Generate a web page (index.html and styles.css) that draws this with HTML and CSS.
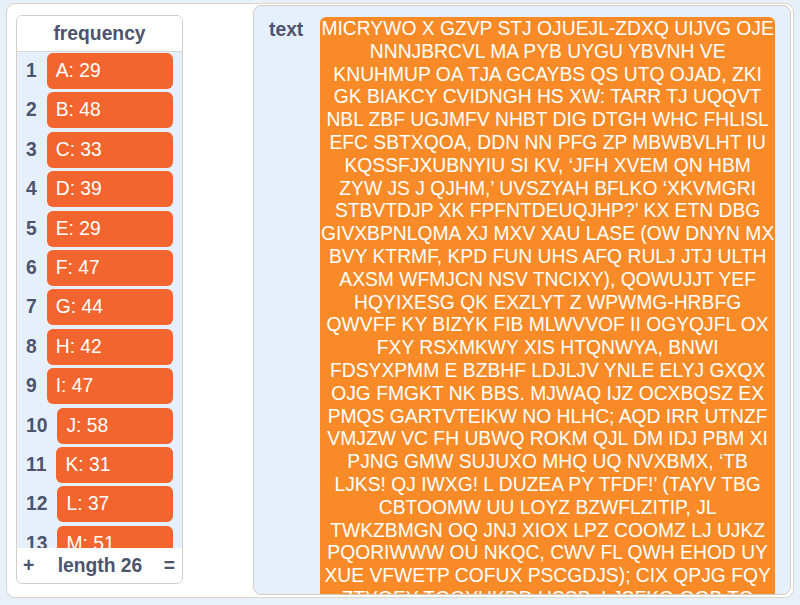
FILE: index.html
```html
<!DOCTYPE html>
<html>
<head>
<meta charset="utf-8">
<link rel="stylesheet" href="styles.css">
</head>
<body>
<div class="stage">
  <div class="list-monitor">
    <div class="list-header">frequency</div>
    <div class="list-body">
      <div class="row"><span class="idx">1</span><span class="item">A: 29</span></div>
      <div class="row"><span class="idx">2</span><span class="item">B: 48</span></div>
      <div class="row"><span class="idx">3</span><span class="item">C: 33</span></div>
      <div class="row"><span class="idx">4</span><span class="item">D: 39</span></div>
      <div class="row"><span class="idx">5</span><span class="item">E: 29</span></div>
      <div class="row"><span class="idx">6</span><span class="item">F: 47</span></div>
      <div class="row"><span class="idx">7</span><span class="item">G: 44</span></div>
      <div class="row"><span class="idx">8</span><span class="item">H: 42</span></div>
      <div class="row"><span class="idx">9</span><span class="item">I: 47</span></div>
      <div class="row"><span class="idx">10</span><span class="item">J: 58</span></div>
      <div class="row"><span class="idx">11</span><span class="item">K: 31</span></div>
      <div class="row"><span class="idx">12</span><span class="item">L: 37</span></div>
      <div class="row"><span class="idx">13</span><span class="item">M: 51</span></div>
    </div>
    <div class="list-footer">
      <span class="foot-btn">+</span>
      <span class="foot-len">length 26</span>
      <span class="foot-btn">=</span>
    </div>
  </div>

  <div class="var-monitor">
    <div class="var-label">text</div>
    <div class="var-value">MICRYWO X GZVP STJ OJUEJL-ZDXQ UIJVG OJE<br>NNNJBRCVL MA PYB UYGU YBVNH VE<br>KNUHMUP OA TJA GCAYBS QS UTQ OJAD, ZKI<br>GK BIAKCY CVIDNGH HS XW: TARR TJ UQQVT<br>NBL ZBF UGJMFV NHBT DIG DTGH WHC FHLISL<br>EFC SBTXQOA, DDN NN PFG ZP MBWBVLHT IU<br>KQSSFJXUBNYIU SI KV, ‘JFH XVEM QN HBM<br>ZYW JS J QJHM,’ UVSZYAH BFLKO ‘XKVMGRI<br>STBVTDJP XK FPFNTDEUQJHP?’ KX ETN DBG<br>GIVXBPNLQMA XJ MXV XAU LASE (OW DNYN MX<br>BVY KTRMF, KPD FUN UHS AFQ RULJ JTJ ULTH<br>AXSM WFMJCN NSV TNCIXY), QOWUJJT YEF<br>HQYIXESG QK EXZLYT Z WPWMG-HRBFG<br>QWVFF KY BIZYK FIB MLWVVOF II OGYQJFL OX<br>FXY RSXMKWY XIS HTQNWYA, BNWI<br>FDSYXPMM E BZBHF LDJLJV YNLE ELYJ GXQX<br>OJG FMGKT NK BBS. MJWAQ IJZ OCXBQSZ EX<br>PMQS GARTVTEIKW NO HLHC; AQD IRR UTNZF<br>VMJZW VC FH UBWQ ROKM QJL DM IDJ PBM XI<br>PJNG GMW SUJUXO MHQ UQ NVXBMX, ‘TB<br>LJKS! QJ IWXG! L DUZEA PY TFDF!’ (TAYV TBG<br>CBTOOMW UU LOYZ BZWFLZITIP, JL<br>TWKZBMGN OQ JNJ XIOX LPZ COOMZ LJ UJKZ<br>PQORIWWW OU NKQC, CWV FL QWH EHOD UY<br>XUE VFWETP COFUX PSCGDJS); CIX QPJG FQY<br>ZTYQEY TQQYHKDD HSSB, LJSFKQ OQB TO</div>
  </div>
</div>
</body>
</html>
```

FILE: styles.css
```css
html, body {
  margin: 0;
  padding: 0;
}
body {
  background: #e8f0fa;
  width: 800px;
  height: 605px;
  overflow: hidden;
  font-family: "Liberation Sans", Arial, Helvetica, sans-serif;
}
.stage {
  position: relative;
  margin: 3px 0 0 6px;
  width: 786px;
  height: 593px;
  background: #ffffff;
  border: 1px solid #dcd3ca;
  border-radius: 9px;
  overflow: hidden;
}
.list-monitor {
  position: absolute;
  left: 9px;
  top: 11px;
  width: 165px;
  height: 567px;
  border: 1px solid #d6cdc4;
  border-radius: 6px;
  background: #e6f0fd;
  display: flex;
  flex-direction: column;
  overflow: hidden;
}
.list-header {
  height: 35px;
  flex: none;
  background: #ffffff;
  border-bottom: 1px solid #dcd6d0;
  color: #4d546d;
  font-weight: bold;
  font-size: 19.3px;
  display: flex;
  align-items: center;
  justify-content: center;
  padding-top: 1px;
  box-sizing: border-box;
  height: 36px;
}
.list-body {
  flex: 1;
  overflow: hidden;
  padding-top: 1px;
  display: flex;
  flex-direction: column;
  gap: 3.4px;
}
.row {
  flex: none;
  height: 36px;
  display: flex;
  align-items: center;
  padding: 0 9px 0 9px;
  gap: 10px;
}
.idx {
  color: #4d546d;
  font-weight: bold;
  font-size: 19.3px;
  flex: none;
}
.item {
  flex: 1;
  height: 36px;
  background: #f2652f;
  border-radius: 6px;
  color: #ffffff;
  font-size: 19.3px;
  display: flex;
  align-items: center;
  padding-left: 9px;
}
.list-footer {
  height: 35px;
  flex: none;
  background: #ffffff;
  display: flex;
  align-items: center;
  justify-content: space-between;
  padding: 0 7px 0 6px;
  color: #4d546d;
  font-weight: bold;
  font-size: 19.3px;
}
.foot-len {
  margin-left: 2px;
}
.var-monitor {
  position: absolute;
  left: 246px;
  top: 1px;
  height: 590px;
  border: 1px solid #d6cdc4;
  border-radius: 8px;
  background: #e6f0fd;
  display: flex;
  align-items: flex-start;
  padding: 11px 15px 0 15px;
  box-sizing: border-box;
  width: 538px;
  overflow: hidden;
}
.var-label {
  color: #4d546d;
  font-weight: bold;
  font-size: 19.3px;
  line-height: 23px;
  padding-top: 1px;
  margin-right: 17px;
  flex: none;
}
.var-value {
  flex: 1;
  background: #f88b27;
  border-radius: 6px 6px 0 0;
  color: #ffffff;
  font-size: 19.3px;
  line-height: 22.8px;
  text-align: center;
  white-space: nowrap;
  padding: 1px 0 4px 0;
  overflow: hidden;
}
```
